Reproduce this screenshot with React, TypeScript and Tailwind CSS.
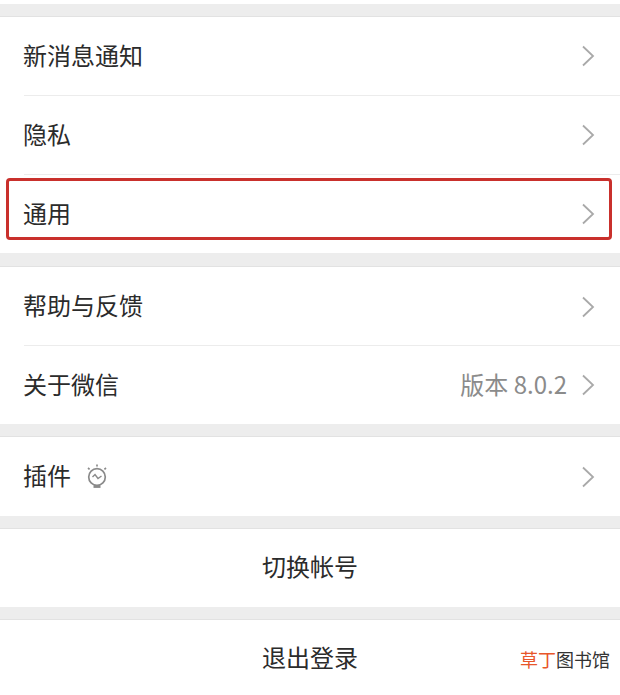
const FONT = "font-['Noto_Sans_CJK_SC','Noto_Sans',sans-serif]";

function Chevron() {
  return (
    <svg width="14" height="22" viewBox="0 0 14 22" fill="none" className="shrink-0">
      <path d="M2 1.5 L12 11 L2 20.5" stroke="#a9a9a9" strokeWidth="1.8" />
    </svg>
  );
}

function BulbIcon() {
  return (
    <svg width="22" height="25" viewBox="0 0 22 25" fill="none" stroke="#8a8a8a" strokeWidth="1.7">
      <circle cx="11" cy="13" r="8.3" />
      <path d="M6.5 13 L9 10.5 L12 14.5 L15.5 12" strokeWidth="1.4" />
      <path d="M11 0.5 V2.5 M2 4 L3.6 5.4 M20 4 L18.4 5.4" />
      <path d="M7.5 22.8 H14.5" strokeWidth="2.2" />
    </svg>
  );
}

function Row({ label, value, icon, divider, short, lift, raised, children }: { label: string; value?: string; icon?: boolean; divider?: boolean; short?: boolean; lift?: boolean; raised?: boolean; children?: React.ReactNode }) {
  return (
    <div className={`relative pl-[23px] pr-[25px] flex items-center justify-between ${short ? "h-[78px]" : "h-[79px]"} ${lift ? "pb-[2px]" : ""}`}>
      <div className="flex items-center gap-[15px] text-[24px] text-[#2b2b2b]">
        <span className={raised ? "pb-[4px]" : "pb-[2px]"}>{label}</span>
        {icon && <BulbIcon />}
      </div>
      <div className="flex items-center gap-[14px]">
        {value && <span className="pb-[2px] text-[24px] text-[#8b8b8b]">{value}</span>}
        <Chevron />
      </div>
      {divider && <div className="absolute left-6 right-0 bottom-0 h-px bg-[#ececec]" />}
      {children}
    </div>
  );
}

function Gap({ tall }: { tall?: boolean }) {
  return <div className={`bg-[#ededed] border-b border-[#e2e2e2] ${tall ? "h-[14px]" : "h-[13px]"}`} />;
}

export default function App() {
  return (
    <div className={`w-[620px] h-[695px] overflow-hidden bg-white relative ${FONT}`}>
      <div className="h-[4px]" />
      <Gap />
      <Row label="新消息通知" divider lift />
      <Row label="隐私" divider lift />
      <Row label="通用" short>
        <div className="absolute left-[6px] top-[3px] w-[606px] h-[62px] border-[3px] border-[#c9302c] rounded-[4px]" />
      </Row>
      <Gap tall />
      <Row label="帮助与反馈" divider raised />
      <Row label="关于微信" value="版本 8.0.2" short />
      <Gap />
      <Row label="插件" icon raised />
      <Gap />
      <div className="h-[78px] pb-[4px] flex items-center justify-center text-[24px] text-[#2b2b2b]">切换帐号</div>
      <Gap />
      <div className="h-[75px] pb-[2px] flex items-center justify-center text-[24px] text-[#2b2b2b]">退出登录</div>
      <div className="absolute left-[520px] top-[646px] text-[18px] leading-[26px] text-[#333]">
        <span className="text-[#e8562a]">草丁</span>图书馆
      </div>
    </div>
  );
}
